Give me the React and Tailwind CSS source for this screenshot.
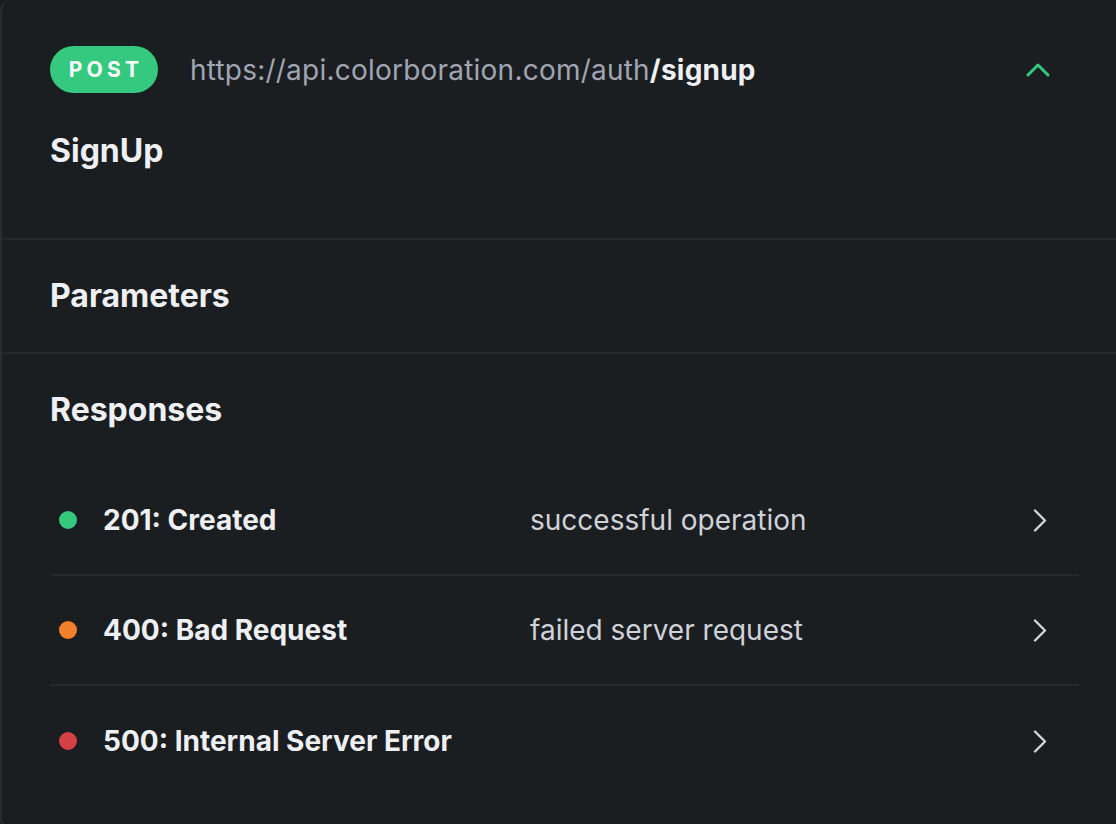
import React from "react";

const font = { fontFamily: "Inter, 'Noto Sans', sans-serif" };

function ChevronUp() {
  return (
    <svg width="24" height="15" viewBox="0 0 24 15" fill="none">
      <polyline points="2,13 12,3 22,13" stroke="#34c97f" strokeWidth="3" strokeLinecap="round" strokeLinejoin="round" />
    </svg>
  );
}

function ChevronRight() {
  return (
    <svg width="14" height="23" viewBox="0 0 14 23" fill="none">
      <polyline points="2,1.5 12,11.5 2,21.5" stroke="#d4d7dc" strokeWidth="2.3" strokeLinecap="round" strokeLinejoin="round" />
    </svg>
  );
}

const rows = [
  { code: "201: Created", desc: "successful operation", color: "bg-[#34c97f]" },
  { code: "400: Bad Request", desc: "failed server request", color: "bg-[#f5802a]" },
  { code: "500: Internal Server Error", desc: "", color: "bg-[#d63f44]" },
];

export default function App() {
  return (
    <div className="w-[1116px] h-[824px] overflow-hidden bg-[#1b1e21]" style={font}>
      <div className="h-[830px] border-l-2 border-[#2a2d34] rounded-l-[12px] bg-[#1b1e21]">
        <div className="h-[240px] border-b-2 border-[#25282e] pl-[48px] pr-[66px] pt-[46px]">
          <div className="flex items-center h-[47px]">
            <div className="h-[47px] w-[108px] rounded-full bg-[#34c97f] flex items-center justify-center pl-[4px] text-white text-[21px] font-bold tracking-[0.2em]">
              POST
            </div>
            <div className="ml-[32px] text-[28px] text-[#a0a5b2] leading-none tracking-[0.22px]">
              https://api.colorboration.com/auth<span className="font-bold text-[#eef0f4]">/signup</span>
            </div>
            <div className="ml-auto flex items-center">
              <ChevronUp />
            </div>
          </div>
          <div className="mt-[42px] text-[32px] font-bold text-[#eef0f4] leading-none">SignUp</div>
        </div>
        <div className="h-[114px] border-b-2 border-[#25282e] pl-[48px] flex items-center">
          <div className="text-[32px] font-bold text-[#eef0f4] leading-none">Parameters</div>
        </div>
        <div className="pl-[48px] pr-[37px]">
          <div className="h-[112px] flex items-center">
            <div className="text-[32px] font-bold text-[#eef0f4] leading-none">Responses</div>
          </div>
          <div className="flex flex-col">
            {rows.map((r, i) => (
              <div
                key={r.code}
                className={
                  "h-[110px] flex items-center " + (i < rows.length - 1 ? "border-b-2 border-[#25282e]" : "")
                }
              >
                <div className={"w-[18px] h-[18px] rounded-full ml-[9px] " + r.color} />
                <div className="ml-[26px] w-[427px] text-[28px] font-bold text-[#eef0f4] leading-none">{r.code}</div>
                <div className="text-[28px] text-[#cfd2d8] leading-none">{r.desc}</div>
                <div className="ml-auto mr-[32px] flex items-center">
                  <ChevronRight />
                </div>
              </div>
            ))}
          </div>
        </div>
      </div>
    </div>
  );
}
